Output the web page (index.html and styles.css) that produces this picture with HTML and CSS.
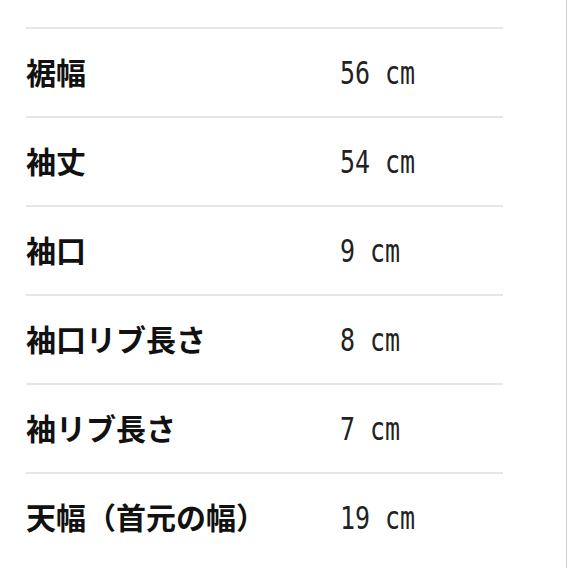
FILE: index.html
```html
<!DOCTYPE html>
<html lang="ja">
<head>
  <meta charset="UTF-8">
  <meta name="viewport" content="width=device-width, initial-scale=1">
  <title>サイズ表</title>
  <link rel="stylesheet" href="styles.css">
</head>
<body>

  <div class="page">
    <div class="size-table">
      <div class="size-row">
        <div class="size-label">裾幅</div>
        <div class="size-value"><span>56 cm</span></div>
      </div>
      <div class="size-row">
        <div class="size-label">袖丈</div>
        <div class="size-value"><span>54 cm</span></div>
      </div>
      <div class="size-row">
        <div class="size-label">袖口</div>
        <div class="size-value"><span>9 cm</span></div>
      </div>
      <div class="size-row">
        <div class="size-label">袖口リブ長さ</div>
        <div class="size-value"><span>8 cm</span></div>
      </div>
      <div class="size-row">
        <div class="size-label">袖リブ長さ</div>
        <div class="size-value"><span>7 cm</span></div>
      </div>
      <div class="size-row">
        <div class="size-label">天幅（首元の幅）</div>
        <div class="size-value"><span>19 cm</span></div>
      </div>
    </div>
  </div>

</body>
</html>
```

FILE: styles.css
```css
body {
  margin: 0;
  background: #ffffff;
  font-family: "Noto Sans CJK JP", "Noto Sans", sans-serif;
  color: #111;
}

.page {
  width: 567px;
  height: 568px;
  border-right: 1px solid #cfcfcf;
  padding: 27px 0 0 26px;
  box-sizing: border-box;
  overflow: hidden;
}

.size-table {
  width: 477px;
}

.size-row {
  display: flex;
  align-items: center;
  height: 87px;
  border-top: 2px solid #e6e6e6;
}

.size-label {
  width: 314px;
  font-size: 30px;
  font-weight: bold;
  line-height: 1;
  margin-bottom: 3px;
}

.size-value {
  flex: 1;
  font-family: "DejaVu Sans Mono", monospace;
  font-size: 32px;
  color: #222;
  line-height: 1;
}

/* fuente estrecha */
.size-value span {
  display: inline-block;
  transform: scaleX(0.78);
  transform-origin: left center;
}
```
